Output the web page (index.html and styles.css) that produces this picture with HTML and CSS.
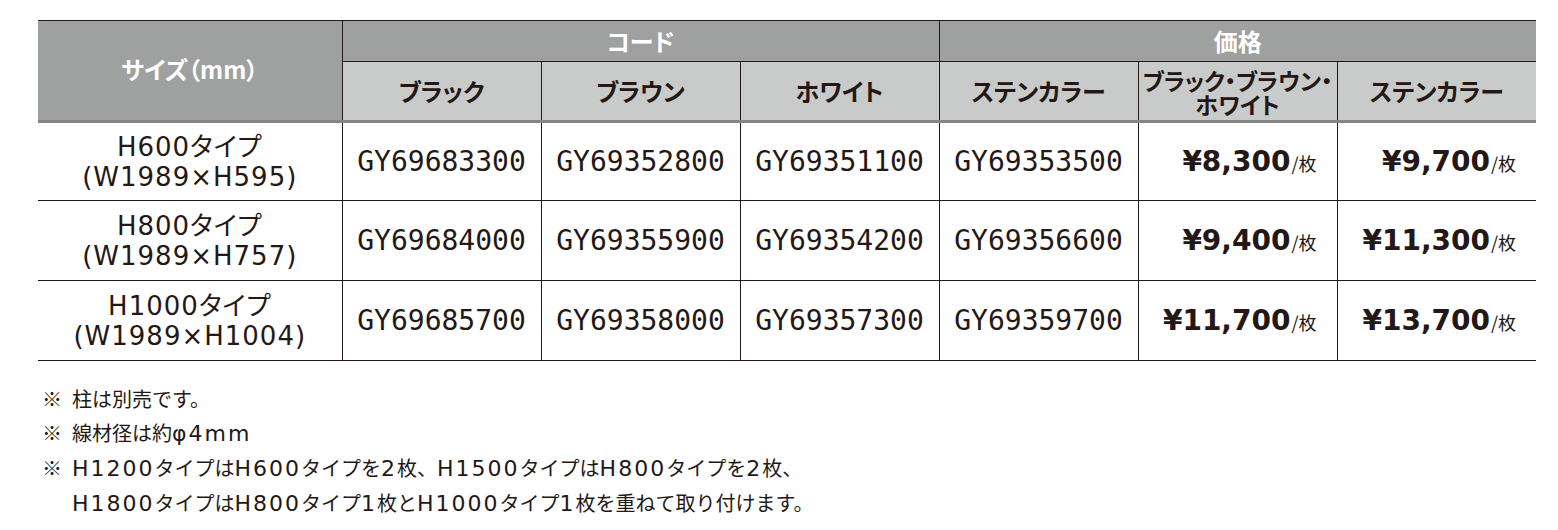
FILE: index.html
```html
<!DOCTYPE html>
<html lang="ja">
<head>
<meta charset="utf-8">
<title>サイズ・価格表</title>
<link rel="stylesheet" href="styles.css">
</head>
<body>
<table class="spec">
  <colgroup>
    <col class="c-size">
    <col class="c-code"><col class="c-code"><col class="c-code"><col class="c-code">
    <col class="c-price"><col class="c-price">
  </colgroup>
  <thead>
    <tr class="h1">
      <th rowspan="2" class="size-h">サイズ（mm）</th>
      <th colspan="3">コード</th>
      <th colspan="3" class="last">価格</th>
    </tr>
    <tr class="h2">
      <th>ブラック</th>
      <th>ブラウン</th>
      <th>ホワイト</th>
      <th>ステンカラー</th>
      <th class="two">ブラック・ブラウン・<br>ホワイト</th>
      <th class="last">ステンカラー</th>
    </tr>
  </thead>
  <tbody>
    <tr class="first">
      <td class="size">H600タイプ<br>(W1989×H595)</td>
      <td class="code">GY69683300</td>
      <td class="code">GY69352800</td>
      <td class="code">GY69351100</td>
      <td class="code">GY69353500</td>
      <td class="price"><span class="yen">¥8,300</span><span class="unit">/枚</span></td>
      <td class="price last"><span class="yen">¥9,700</span><span class="unit">/枚</span></td>
    </tr>
    <tr>
      <td class="size">H800タイプ<br>(W1989×H757)</td>
      <td class="code">GY69684000</td>
      <td class="code">GY69355900</td>
      <td class="code">GY69354200</td>
      <td class="code">GY69356600</td>
      <td class="price"><span class="yen">¥9,400</span><span class="unit">/枚</span></td>
      <td class="price last"><span class="yen">¥11,300</span><span class="unit">/枚</span></td>
    </tr>
    <tr>
      <td class="size">H1000タイプ<br>(W1989×H1004)</td>
      <td class="code">GY69685700</td>
      <td class="code">GY69358000</td>
      <td class="code">GY69357300</td>
      <td class="code">GY69359700</td>
      <td class="price"><span class="yen">¥11,700</span><span class="unit">/枚</span></td>
      <td class="price last"><span class="yen">¥13,700</span><span class="unit">/枚</span></td>
    </tr>
  </tbody>
</table>

<ul class="notes">
  <li><span class="mark">※</span><span class="txt">柱は別売です。</span></li>
  <li><span class="mark">※</span><span class="txt">線材径は約<span class="en">φ4mm</span></span></li>
  <li><span class="mark">※</span><span class="txt"><span class="en">H1200</span>タイプは<span class="en">H600</span>タイプを<span class="en">2</span>枚、<span class="en">H1500</span>タイプは<span class="en">H800</span>タイプを<span class="en">2</span>枚、<br><span class="en">H1800</span>タイプは<span class="en">H800</span>タイプ<span class="en">1</span>枚と<span class="en">H1000</span>タイプ<span class="en">1</span>枚を重ねて取り付けます。</span></li>
</ul>
</body>
</html>
```

FILE: styles.css
```css
* { box-sizing: border-box; }

body {
  margin: 0;
  padding: 20px 0 0 38px;
  background: #ffffff;
  color: #231815;
  font-family: "Noto Sans CJK JP", "Noto Sans", sans-serif;
}

.spec {
  border-collapse: collapse;
  table-layout: fixed;
  width: 1497px;
}

.c-size { width: 304px; }
.c-code { width: 199px; }
.c-price { width: 199px; }

.spec th,
.spec td {
  padding: 0;
  text-align: center;
  vertical-align: middle;
}

.spec th {
  font-weight: 700;
  font-size: 24px;
  font-feature-settings: "palt";
  line-height: 1.1;
}

.h1 th {
  height: 41px;
  background: #9fa0a0;
  color: #ffffff;
  border-top: 1px solid #231815;
  border-bottom: 1px solid #231815;
  border-left: 1px solid #231815;
  border-right: 1px solid #231815;
}

.h1 th.size-h {
  border-left: none;
  border-bottom: 3px solid #858585;
  padding-bottom: 2px;
}

.h2 th {
  height: 60px;
  background: #c9caca;
  color: #231815;
  border-left: 1px solid #231815;
  border-right: 1px solid #231815;
  border-bottom: 3px solid #858585;
}

.spec .last { border-right: none; }

.h2 th.two {
  font-size: 23px;
  line-height: 24px;
  padding-top: 2px;
}

.spec td {
  height: 80px;
  border-bottom: 1px solid #231815;
  border-left: 1px solid #231815;
  border-right: 1px solid #231815;
}

.spec tr.first td { height: 79px; }

.spec td.size {
  border-left: none;
  font-family: "DejaVu Sans", "Noto Sans CJK JP", sans-serif;
  font-feature-settings: "palt";
  font-size: 26px;
  font-weight: 400;
  letter-spacing: 1px;
  line-height: 30px;
}

.spec td.code {
  font-family: "DejaVu Sans Mono", "Liberation Mono", monospace;
  font-size: 28px;
}

.spec td.price {
  text-align: right;
  padding-right: 20px;
  white-space: nowrap;
}

.yen {
  font-family: "DejaVu Sans", sans-serif;
  font-weight: 700;
  font-size: 28px;
}

.unit {
  font-size: 18px;
  font-weight: 400;
  margin-left: 1px;
}

.notes {
  list-style: none;
  margin: 21px 0 0 4px;
  padding: 0;
  font-size: 20px;
  font-weight: 400;
  line-height: 34px;
}

.notes li {
  display: flex;
}

.notes .mark {
  width: 30px;
  flex: none;
}

.notes .en {
  font-family: "DejaVu Sans", sans-serif;
  font-size: 22px;
  letter-spacing: 2px;
}
```
